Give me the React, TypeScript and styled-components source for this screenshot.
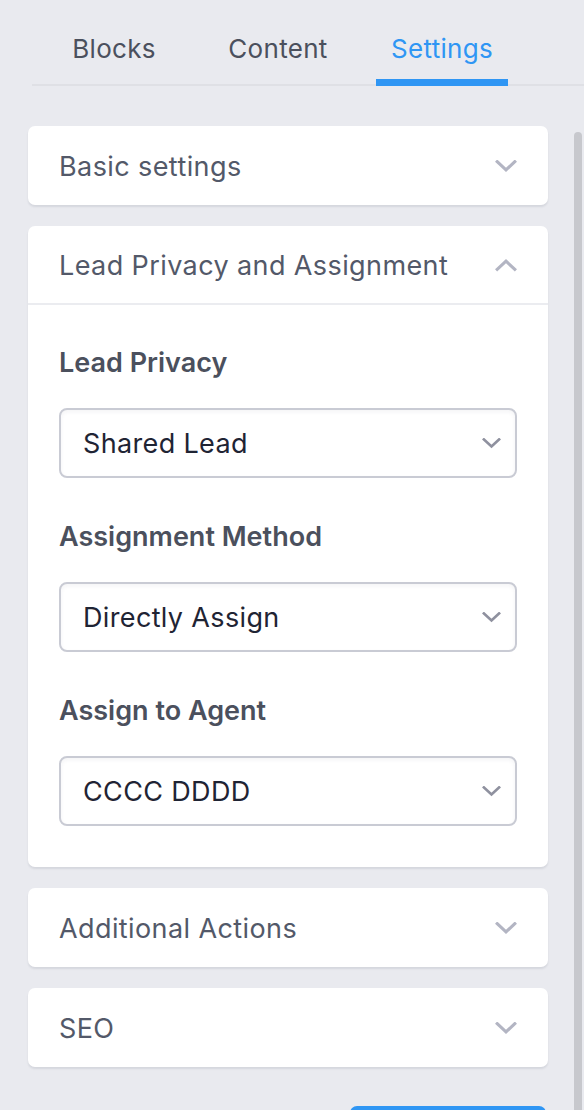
import React from "react";
import styled, { createGlobalStyle } from "styled-components";

const Global = createGlobalStyle`
  html, body { margin: 0; padding: 0; }
  body {
    background: #e9eaef;
    font-family: Inter, "Noto Sans", "Liberation Sans", sans-serif;
    -webkit-font-smoothing: antialiased;
  }
  * { box-sizing: border-box; }
`;

const Page = styled.div`
  width: 584px;
  height: 1110px;
  overflow: hidden;
  background: #e9eaef;
`;

const TabBar = styled.nav`
  display: flex;
  gap: 32px;
  margin-left: 32px;
  padding-left: 16px;
  height: 86px;
  border-bottom: 2px solid #dfe0e5;
`;

const Tab = styled.div<{ $active?: boolean }>`
  width: 132px;
  height: 86px;
  padding-top: 33px;
  text-align: center;
  font-size: 26px;
  line-height: 31px;
  letter-spacing: 0.3px;
  color: ${(p) => (p.$active ? "#2f96f4" : "#4b505d")};
  border-bottom: 7px solid ${(p) => (p.$active ? "#2f96f4" : "transparent")};
`;

const Body = styled.div`
  display: flex;
  align-items: flex-start;
  padding-left: 28px;
  gap: 26px;
`;

const Column = styled.div`
  width: 520px;
  padding-top: 40px;
  display: flex;
  flex-direction: column;
  gap: 21px;
`;

const ScrollThumb = styled.div`
  width: 8px;
  height: 1000px;
  margin-top: 46px;
  background: #c7c8cd;
  border-radius: 4px 4px 0 0;
`;

const Card = styled.section`
  background: #ffffff;
  border-radius: 7px;
  box-shadow: 0 2px 2px rgba(40, 45, 70, 0.1);
`;

const CardHeader = styled.div<{ $open?: boolean }>`
  height: 79px;
  padding: 2px 31px 0;
  display: flex;
  align-items: center;
  justify-content: space-between;
  border-bottom: ${(p) => (p.$open ? "2px solid #ebecf0" : "none")};
`;

const CardTitle = styled.span`
  font-size: 27px;
  line-height: 32px;
  color: #535969;
  letter-spacing: 0.4px;
`;

const CardBody = styled.div`
  padding: 42px 31px 41px;
  display: flex;
  flex-direction: column;
  gap: 43px;
`;

const Field = styled.div`
  display: flex;
  flex-direction: column;
  gap: 29px;
`;

const Label = styled.label`
  font-size: 27px;
  line-height: 32px;
  font-weight: 600;
  color: #4b505d;
`;

const Select = styled.div`
  height: 70px;
  border: 2px solid #c9cbd4;
  border-radius: 8px;
  padding: 1px 14px 0 22px;
  display: flex;
  align-items: center;
  justify-content: space-between;
  box-shadow: inset 0 2px 4px rgba(40, 45, 70, 0.05);
  font-size: 27px;
  color: #1f2434;
  letter-spacing: 0.35px;
`;

const Footer = styled.div`
  display: flex;
  justify-content: flex-end;
  padding: 18px 2px 0 0;
`;

const SaveButton = styled.div`
  width: 196px;
  height: 50px;
  background: #2f96f4;
  border-radius: 7px;
`;

const Chevron = ({ up, color, w }: { up?: boolean; color: string; w: number }) => (
  <svg width={w} height={w * 0.55} viewBox="0 0 20 11" fill="none">
    <path
      d={up ? "M2 9.5 L10 2 L18 9.5" : "M2 1.5 L10 9 L18 1.5"}
      stroke={color}
      strokeWidth={2.8}
      strokeLinecap="square"
    />
  </svg>
);

const Collapsed = ({ title }: { title: string }) => (
  <Card>
    <CardHeader>
      <CardTitle>{title}</CardTitle>
      <Chevron color="#b3b5c3" w={22} />
    </CardHeader>
  </Card>
);

const SelectField = ({ label, value }: { label: string; value: string }) => (
  <Field>
    <Label>{label}</Label>
    <Select>
      <span>{value}</span>
      <Chevron color="#8f919f" w={19} />
    </Select>
  </Field>
);

export default function App() {
  return (
    <Page>
      <Global />
      <TabBar>
        <Tab>Blocks</Tab>
        <Tab>Content</Tab>
        <Tab $active>Settings</Tab>
      </TabBar>
      <Body>
        <Column>
          <Collapsed title="Basic settings" />
          <Card>
            <CardHeader $open>
              <CardTitle>Lead Privacy and Assignment</CardTitle>
              <Chevron up color="#b3b5c3" w={22} />
            </CardHeader>
            <CardBody>
              <SelectField label="Lead Privacy" value="Shared Lead" />
              <SelectField label="Assignment Method" value="Directly Assign" />
              <SelectField label="Assign to Agent" value="CCCC DDDD" />
            </CardBody>
          </Card>
          <Collapsed title="Additional Actions" />
          <Collapsed title="SEO" />
          <Footer>
            <SaveButton />
          </Footer>
        </Column>
        <ScrollThumb />
      </Body>
    </Page>
  );
}
